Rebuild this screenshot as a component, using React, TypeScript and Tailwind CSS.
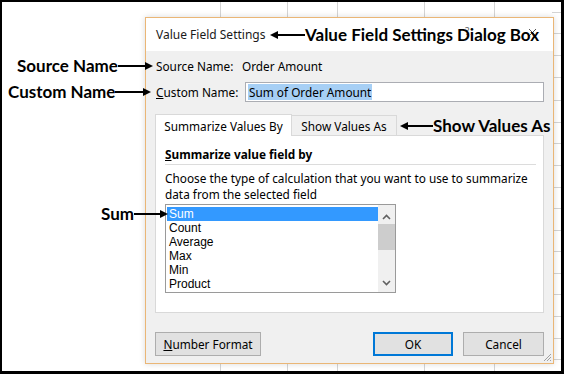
import React from 'react'

const ui = { fontFamily: '"Noto Sans", "Open Sans", sans-serif' }
const note = { fontFamily: 'Lato, "Liberation Sans", sans-serif' }
const list = { fontFamily: '"Liberation Sans", Arial, sans-serif' }

function Arrow({ dir, w }: { dir: 'left' | 'right'; w: number }) {
  return (
    <svg width={w} height={10} viewBox={`0 0 ${w} 10`} className="block">
      {dir === 'right' ? (
        <>
          <line x1={0} y1={5} x2={w - 6} y2={5} stroke="black" strokeWidth={2} />
          <polygon points={`${w - 8},1 ${w},5 ${w - 8},9`} fill="black" />
        </>
      ) : (
        <>
          <line x1={6} y1={5} x2={w} y2={5} stroke="black" strokeWidth={2} />
          <polygon points="8,1 0,5 8,9" fill="black" />
        </>
      )}
    </svg>
  )
}

const rows = [12, 33, 55, 77, 100, 122, 143, 165, 187, 208, 230, 251, 273, 294, 316, 338, 359]
const cols = [220, 287, 337, 424, 494]

export default function App() {
  return (
    <div className="w-[564px] h-[374px] bg-white">
      <div className="relative w-full h-full border-l-2 border-t-2 border-r-[3px] border-b-[3px] border-black overflow-hidden">
        {/* spreadsheet grid behind the dialog */}
        {cols.map((x) => (
          <div key={x} className="absolute top-0 bottom-0 w-px bg-[#d4d4d4]" style={{ left: x - 2 }} />
        ))}
        {rows.map((y) => (
          <div key={y} className="absolute left-[550px] right-0 h-px bg-[#d4d4d4]" style={{ top: y - 2 }} />
        ))}

        {/* dialog window */}
        <div
          className="absolute left-[143px] top-[15px] w-[409px] h-[347px] border border-[#eab676] bg-[#f0f0f0] flex flex-col shadow-[0_0_6px_rgba(0,0,0,0.15)] text-[11.8px] text-black leading-4"
          style={ui}
        >
          <div className="h-[33px] bg-white flex items-center pl-[10px] relative">
            <span className="text-[12px] text-[#1a1a1a]">Value Field Settings</span>
            <span className="absolute left-[319px] top-[5px] text-[10px] text-[#666]">?</span>
            <svg width="9" height="9" viewBox="0 0 9 9" className="absolute left-[382px] top-[10px]">
              <path d="M1 1 L8 8 M8 1 L1 8" stroke="#555" strokeWidth="1" />
            </svg>
          </div>

          <div className="flex flex-col px-[9px]">
            <div className="flex h-4 mt-[7px] pl-[1px]">
              <span className="w-[86px]">Source Name:</span>
              <span>Order Amount</span>
            </div>

            <div className="flex items-center h-5 mt-[8px] pl-[1px]">
              <span className="w-[89px]">
                <u>C</u>ustom Name:
              </span>
              <div className="flex-1 h-5 border border-[#abadb3] bg-white flex items-center px-[2px]">
                <span className="bg-[#a6cff5] px-[1px]">Sum of Order Amount</span>
              </div>
            </div>

            <div className="flex items-end mt-3 h-[21px]">
              <div className="w-[137px] h-[22px] bg-white border border-b-0 border-[#d9d9d9] flex items-center justify-center relative z-10 -mb-px">
                Summarize Values By
              </div>
              <div className="w-[105px] h-[20px] bg-[#f0f0f0] border border-b-0 border-l-0 border-[#d9d9d9] flex items-center justify-center">
                Show Values As
              </div>
            </div>

            <div className="h-[178px] bg-white border border-[#d9d9d9] pl-[9px] pr-[7px] pt-[10px] flex flex-col">
              <div className="font-bold">
                <u>S</u>ummarize value field by
              </div>
              <div className="h-px bg-[#dcdcdc] mt-[2px]" />
              <div className="mt-[5px] whitespace-nowrap">Choose the type of calculation that you want to use to summarize</div>
              <div>data from the selected field</div>

              <div className="mt-[2px] w-[231px] h-[89px] border border-[#9a9a9a] flex overflow-hidden">
                <div className="flex-1 pt-[2px] pl-px text-[12px]" style={list}>
                  {['Sum', 'Count', 'Average', 'Max', 'Min', 'Product'].map((t, i) => (
                    <div
                      key={t}
                      className={
                        i === 0
                          ? 'h-[14px] leading-[14px] pl-[2px] bg-[#3399ff] text-white'
                          : 'h-[14px] leading-[14px] pl-[2px]'
                      }
                    >
                      {t}
                    </div>
                  ))}
                </div>
                <div className="w-[17px] bg-[#f0f0f0] flex flex-col items-center">
                  <svg width="9" height="6" viewBox="0 0 9 6" className="mt-[9px]">
                    <path d="M1 5 L4.5 1.5 L8 5" fill="none" stroke="#606060" strokeWidth="1.6" />
                  </svg>
                  <div className="w-full h-[26px] bg-[#cdcdcd] mt-[4px]" />
                  <svg width="9" height="6" viewBox="0 0 9 6" className="mt-auto mb-[6px]">
                    <path d="M1 1 L4.5 4.5 L8 1" fill="none" stroke="#606060" strokeWidth="1.6" />
                  </svg>
                </div>
              </div>
            </div>

            <div className="flex mt-[19px] h-6">
              <button className="w-[106px] h-6 bg-[#e1e1e1] border border-[#adadad]">
                <u>N</u>umber Format
              </button>
              <button className="ml-auto w-[80px] h-6 bg-[#e1e1e1] border-2 border-[#0078d7]">OK</button>
              <button className="ml-[10px] w-[81px] h-6 bg-[#e1e1e1] border border-[#adadad]">Cancel</button>
            </div>
          </div>

          <svg width="10" height="10" viewBox="0 0 10 10" className="absolute right-[1px] bottom-[1px]">
            <path d="M9 2 L2 9 M9 5 L5 9 M9 8 L8 9" stroke="#a0a0a0" strokeWidth="1" />
          </svg>
        </div>

        {/* annotations */}
        <div className="absolute left-[268px] top-[23px] flex items-center text-[17px] font-bold leading-5" style={note}>
          <Arrow dir="left" w={35} />
          <span>Value Field Settings Dialog Box</span>
        </div>
        <div className="absolute left-[15px] top-[54px] flex items-center text-[17px] font-bold leading-5" style={note}>
          <span>Source Name</span>
          <Arrow dir="right" w={35} />
        </div>
        <div className="absolute left-[6px] top-[80px] flex items-center text-[17px] font-bold leading-5" style={note}>
          <span>Custom Name</span>
          <Arrow dir="right" w={36} />
        </div>
        <div className="absolute left-[398px] top-[114px] flex items-center text-[17px] font-bold leading-5" style={note}>
          <Arrow dir="left" w={33} />
          <span>Show Values As</span>
        </div>
        <div className="absolute left-[99px] top-[202px] flex items-center text-[17px] font-bold leading-5" style={note}>
          <span>Sum</span>
          <Arrow dir="right" w={34} />
        </div>
      </div>
    </div>
  )
}
